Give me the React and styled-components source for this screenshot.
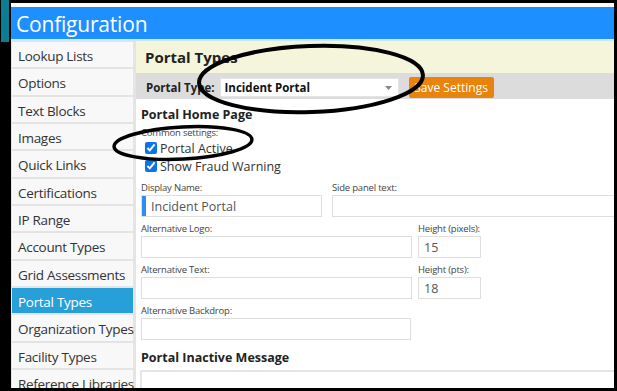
import styled, { createGlobalStyle } from "styled-components";

const GlobalStyle = createGlobalStyle`
  html, body { margin: 0; padding: 0; background: #000; }
  body { font-family: "Open Sans", "Noto Sans", sans-serif; }
  * { box-sizing: border-box; }
`;

const Frame = styled.div`
  position: relative;
  width: 617px;
  height: 391px;
  display: flex;
  background: #000;
  overflow: hidden;
`;

const LeftEdge = styled.div`
  width: 11px;
  flex: none;
  > div {
    margin-left: 1px;
    width: 8px;
    height: 42px;
    background: #0b7d93;
  }
`;

const Window = styled.div`
  flex: 1;
  min-width: 0;
  margin: 3px 3px 3px 0;
  padding-top: 4px;
  background: #fff;
  display: flex;
  flex-direction: column;
  overflow: hidden;
`;

const Header = styled.div`
  height: 34px;
  flex: none;
  padding: 2px 0 0 5px;
  display: flex;
  align-items: center;
  background: #1e8fff;
  border-bottom: 2px solid #d4e9ff;
  color: #fff;
  font-size: 21px;
  letter-spacing: -0.2px;
`;

const Body = styled.div`
  flex: 1;
  min-height: 0;
  display: flex;
`;

const Sidebar = styled.div`
  width: 125px;
  flex: none;
  padding: 1px 3px 0 1px;
  display: flex;
  flex-direction: column;
  gap: 2px;
  background: #e4e4e4;
  overflow: hidden;
`;

const NavItem = styled.div`
  height: 25.33px;
  flex: none;
  padding: 3px 0 0 6px;
  display: flex;
  align-items: center;
  white-space: nowrap;
  font-size: 13.5px;
  letter-spacing: -0.3px;
  color: ${(p) => (p.$active ? "#fff" : "#333")};
  background: ${(p) => (p.$active ? "#27a0da" : "#f8f8f8")};
`;

const Content = styled.div`
  flex: 1;
  min-width: 0;
  display: flex;
  flex-direction: column;
  overflow: hidden;
`;

const TitleBar = styled.div`
  height: 32px;
  flex: none;
  padding-left: 9px;
  display: flex;
  align-items: center;
  background: #f5f5dc;
  font-size: 15px;
  font-weight: 700;
  color: #222;
`;

const ToolBar = styled.div`
  height: 26px;
  flex: none;
  padding: 3px 0 0 10px;
  display: flex;
  align-items: center;
  background: #dcdcdc;
  font-size: 11.5px;
  font-weight: 700;
  color: #222;
`;

const Select = styled.div`
  width: 179px;
  height: 19px;
  margin-left: 5px;
  padding: 0 6px 0 4px;
  display: flex;
  align-items: center;
  justify-content: space-between;
  background: #fff;
  border: 1px solid #e4e4e4;
  font-size: 11.5px;
  font-weight: 700;
  color: #111;
`;

const SaveButton = styled.div`
  width: 85px;
  height: 21px;
  margin-left: 10px;
  display: flex;
  align-items: center;
  justify-content: center;
  background: #e8830c;
  border-radius: 2px;
  color: #fff;
  font-size: 12px;
  font-weight: 400;
`;

const Form = styled.div`
  padding-left: 5px;
  display: flex;
  flex-direction: column;
`;

const Section = styled.div`
  margin-top: ${(p) => p.$top || 0}px;
  line-height: 18px;
  font-size: 12.5px;
  font-weight: 700;
  color: #222;
`;

const Small = styled.div`
  margin-top: 3px;
  line-height: 12px;
  font-size: 9.5px;
  color: #444;
  letter-spacing: -0.2px;
`;

const Check = styled.label`
  height: 18px;
  padding-left: 4px;
  display: flex;
  align-items: center;
  gap: 3px;
  font-size: 12.5px;
  color: #333;
  input {
    width: 12px;
    height: 12px;
    margin: 0;
    accent-color: #0b74ea;
  }
`;

const Fields = styled.div`
  margin-top: 7px;
  display: flex;
  flex-direction: column;
  gap: 6px;
`;

const Row = styled.div`
  display: flex;
  gap: ${(p) => p.$gap || 6}px;
`;

const Field = styled.div`
  width: ${(p) => p.$w}px;
  flex: none;
  label {
    display: block;
    height: 13px;
    line-height: 12px;
    font-size: 9.5px;
    letter-spacing: -0.2px;
    color: #444;
    white-space: nowrap;
  }
`;

const Input = styled.input`
  display: block;
  width: 100%;
  height: 22px;
  margin: 0;
  padding: 0 0 0 ${(p) => (p.$marked ? 9 : 5)}px;
  border: 1.5px solid #dedede;
  box-shadow: ${(p) => (p.$marked ? "inset 4px 0 0 #2f8cf5" : "none")};
  outline: none;
  font-family: inherit;
  font-size: 12.5px;
  color: #555;
  background: #fff;
`;

const MessageBox = styled.div`
  margin-top: 3px;
  margin-left: -1px;
  height: 40px;
  border: 2px solid #e6e6e6;
  border-right: none;
`;

const Annotations = styled.svg`
  position: absolute;
  left: 0;
  top: 0;
  pointer-events: none;
`;

const navItems = [
  "Lookup Lists",
  "Options",
  "Text Blocks",
  "Images",
  "Quick Links",
  "Certifications",
  "IP Range",
  "Account Types",
  "Grid Assessments",
  "Portal Types",
  "Organization Types",
  "Facility Types",
  "Reference Libraries",
];

export default function App() {
  return (
    <Frame>
      <GlobalStyle />
      <LeftEdge>
        <div />
      </LeftEdge>
      <Window>
        <Header>Configuration</Header>
        <Body>
          <Sidebar>
            {navItems.map((n) => (
              <NavItem key={n} $active={n === "Portal Types"}>
                {n}
              </NavItem>
            ))}
          </Sidebar>
          <Content>
            <TitleBar>Portal Types</TitleBar>
            <ToolBar>
              Portal Type:
              <Select>
                Incident Portal
                <svg width="7" height="4" viewBox="0 0 7 4">
                  <path d="M0 0h7L3.5 4z" fill="#888" />
                </svg>
              </Select>
              <SaveButton>Save Settings</SaveButton>
            </ToolBar>
            <Form>
              <Section $top={7}>Portal Home Page</Section>
              <Small>Common settings:</Small>
              <Check>
                <input type="checkbox" checked readOnly />
                Portal Active
              </Check>
              <Check>
                <input type="checkbox" checked readOnly />
                Show Fraud Warning
              </Check>
              <Fields>
                <Row $gap={10}>
                  <Field $w={181}>
                    <label>Display Name:</label>
                    <Input $marked readOnly value="Incident Portal" />
                  </Field>
                  <Field $w={300}>
                    <label>Side panel text:</label>
                    <Input readOnly value="" />
                  </Field>
                </Row>
                <Row>
                  <Field $w={271}>
                    <label>Alternative Logo:</label>
                    <Input readOnly value="" />
                  </Field>
                  <Field $w={63}>
                    <label>Height (pixels):</label>
                    <Input readOnly value="15" />
                  </Field>
                </Row>
                <Row>
                  <Field $w={271}>
                    <label>Alternative Text:</label>
                    <Input readOnly value="" />
                  </Field>
                  <Field $w={63}>
                    <label>Height (pts):</label>
                    <Input readOnly value="18" />
                  </Field>
                </Row>
                <Row>
                  <Field $w={270}>
                    <label>Alternative Backdrop:</label>
                    <Input readOnly value="" />
                  </Field>
                </Row>
              </Fields>
              <Section $top={9}>Portal Inactive Message</Section>
              <MessageBox />
            </Form>
          </Content>
        </Body>
      </Window>
      <Annotations width="617" height="391" viewBox="0 0 617 391">
        <ellipse
          cx="311"
          cy="79"
          rx="112"
          ry="33"
          transform="rotate(-2 311 79)"
          fill="none"
          stroke="#000"
          strokeWidth="4"
        />
        <ellipse
          cx="183"
          cy="143"
          rx="69"
          ry="16"
          transform="rotate(-3 183 143)"
          fill="none"
          stroke="#000"
          strokeWidth="3.5"
        />
      </Annotations>
    </Frame>
  );
}
